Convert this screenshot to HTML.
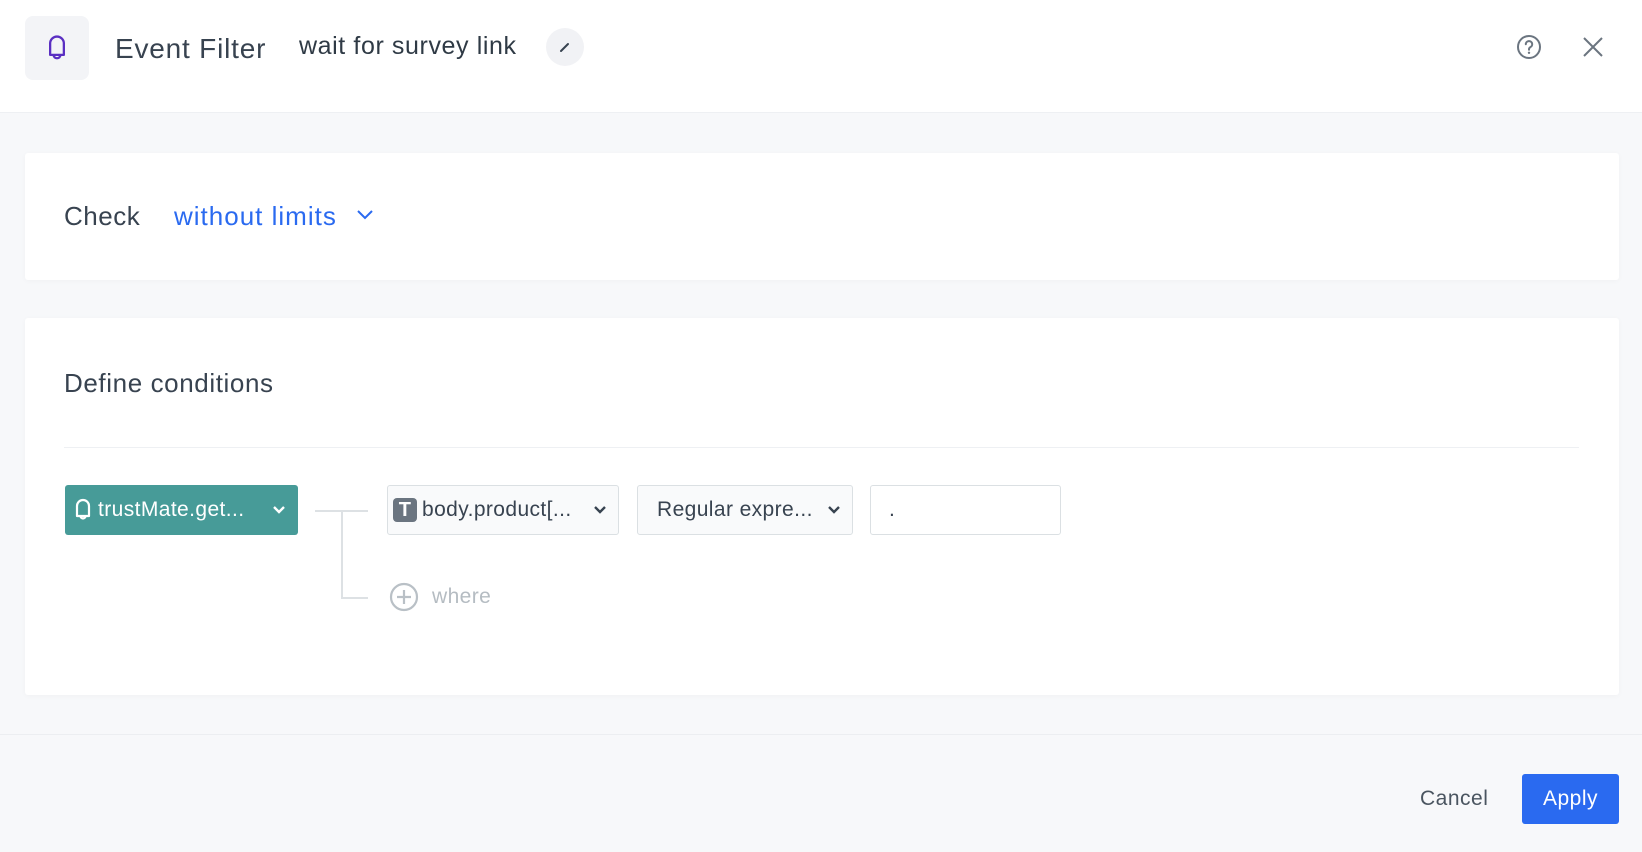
<!DOCTYPE html>
<html><head><meta charset="utf-8"><style>
*{box-sizing:border-box;margin:0;padding:0}
body{width:1642px;height:852px;background:#f7f8fa;font-family:"Liberation Sans",sans-serif;color:#384350;position:relative;overflow:hidden}
.abs{position:absolute}
.header{left:0;top:0;width:1642px;height:113px;background:#fff;border-bottom:1px solid #eef0f3}
.card{background:#fff;left:25px;width:1594px;border-radius:3px;box-shadow:0 1px 6px rgba(0,0,0,0.03)}
.sel{top:485px;height:50px;background:#f9fafb;border:1px solid #dbe0e3;border-radius:3px;font-size:21px;color:#384350;display:flex;align-items:center;letter-spacing:0.4px}
</style></head><body>
<div class="abs header"></div>
<div class="abs" style="left:25px;top:16px;width:64px;height:64px;background:#f3f4f7;border-radius:8px"></div>
<svg class="abs" style="left:41px;top:32px" width="32" height="32" viewBox="0 0 28 28"><path d="M8 20V10a6 6 0 0 1 12 0v10z M11 20a3 3 0 0 0 6 0" fill="none" stroke="#5a2fc2" stroke-width="2" stroke-linejoin="round"/></svg>
<div class="abs" style="left:115px;top:33px;font-size:28px;letter-spacing:0.8px;color:#384350">Event Filter</div>
<div class="abs" style="left:299px;top:32px;font-size:25px;letter-spacing:0.6px;color:#2f3a45">wait for survey link</div>
<div class="abs" style="left:546px;top:28px;width:38px;height:38px;border-radius:50%;background:#f1f2f5"></div>
<svg class="abs" style="left:557px;top:39px" width="16" height="16"><path d="M4 12L11 5" stroke="#384350" stroke-width="2" stroke-linecap="round"/></svg>
<svg class="abs" style="left:1516px;top:34px" width="26" height="26" viewBox="0 0 26 26"><circle cx="13" cy="13" r="11" fill="none" stroke="#6b7580" stroke-width="2"/><path d="M9.8 10.3a3.2 3.2 0 1 1 4.5 2.9c-.9.5-1.3 1-1.3 2v.6" fill="none" stroke="#6b7580" stroke-width="2" stroke-linecap="round"/><circle cx="13" cy="18.8" r="1.2" fill="#6b7580"/></svg>
<svg class="abs" style="left:1582px;top:36px" width="22" height="22"><path d="M2 2L20 20M20 2L2 20" stroke="#6b7580" stroke-width="2"/></svg>

<div class="abs card" style="top:153px;height:127px"></div>
<div class="abs" style="left:64px;top:201px;font-size:26px;letter-spacing:0.5px;color:#384350">Check</div>
<div class="abs" style="left:174px;top:201px;font-size:26px;letter-spacing:1px;color:#2a6af0">without limits</div>
<svg class="abs" style="left:356px;top:208px" width="18" height="14"><path d="M2 3l7 7 7-7" fill="none" stroke="#2a6af0" stroke-width="2"/></svg>

<div class="abs card" style="top:318px;height:377px"></div>
<div class="abs" style="left:64px;top:368px;font-size:26px;letter-spacing:0.6px;color:#384350">Define conditions</div>
<div class="abs" style="left:64px;top:447px;width:1515px;height:1px;background:#eef0f3"></div>

<div class="abs" style="left:65px;top:485px;width:233px;height:50px;background:#479b98;border-radius:3px;color:#fff;font-size:21px;letter-spacing:0.4px;display:flex;align-items:center">
<svg style="margin-left:7px" width="22" height="26" viewBox="0 0 22 26"><path d="M5 19V9a6 6 0 0 1 12 0v10z M8.5 19a2.5 2.5 0 0 0 5 0" fill="none" stroke="#fff" stroke-width="2.2" stroke-linejoin="round"/></svg>
<span style="margin-left:4px">trustMate.get...</span>
<svg style="margin-left:auto;margin-right:12px" width="14" height="10"><path d="M2 2l5 5 5-5" fill="none" stroke="#fff" stroke-width="2.4"/></svg></div>

<div class="abs" style="left:315px;top:510px;width:53px;height:2px;background:#dde1e4"></div>
<div class="abs" style="left:341px;top:510px;width:2px;height:89px;background:#dde1e4"></div>
<div class="abs" style="left:341px;top:597px;width:27px;height:2px;background:#dde1e4"></div>

<div class="abs sel" style="left:387px;width:232px">
<div style="margin-left:5px;width:24px;height:24px;background:#6b7580;border-radius:4px;color:#fff;font-weight:bold;font-size:20px;text-align:center;line-height:24px">T</div>
<span style="margin-left:5px">body.product[...</span>
<svg style="margin-left:auto;margin-right:11px" width="14" height="10"><path d="M2 2l5 5 5-5" fill="none" stroke="#384350" stroke-width="2.4"/></svg></div>
<div class="abs sel" style="left:637px;width:216px">
<span style="margin-left:19px">Regular expre...</span>
<svg style="margin-left:auto;margin-right:11px" width="14" height="10"><path d="M2 2l5 5 5-5" fill="none" stroke="#384350" stroke-width="2.4"/></svg></div>
<div class="abs sel" style="left:870px;width:191px;background:#fff"><span style="margin-left:18px">.</span></div>

<svg class="abs" style="left:389px;top:582px" width="30" height="30"><circle cx="15" cy="15" r="13" fill="none" stroke="#b9c0c6" stroke-width="2.2"/><path d="M15 8v14M8 15h14" stroke="#b9c0c6" stroke-width="2.2"/></svg>
<div class="abs" style="left:432px;top:585px;font-size:21px;letter-spacing:0.4px;color:#b5bcc2">where</div>

<div class="abs" style="left:0;top:734px;width:1642px;height:1px;background:#eceef1"></div>
<div class="abs" style="left:1420px;top:787px;font-size:21px;letter-spacing:0.5px;color:#4a5560">Cancel</div>
<div class="abs" style="left:1522px;top:774px;width:97px;height:50px;background:#2a6af0;border-radius:3px;color:#fff;font-size:21px;letter-spacing:0.5px;text-align:center;line-height:50px">Apply</div>
</body></html>
